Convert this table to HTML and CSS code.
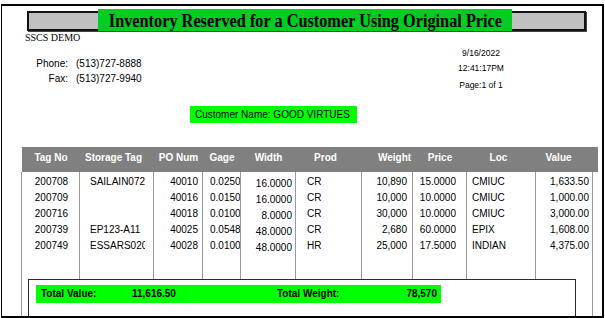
FILE: index.html
```html
<!DOCTYPE html>
<html>
<head>
<meta charset="utf-8">
<link rel="stylesheet" href="styles.css">
</head>
<body>
<div class="frame">
  <div class="titlebar">
    <div class="title"><span class="title-text">Inventory Reserved for a Customer Using Original Price</span></div>
  </div>
  <div class="company">SSCS DEMO</div>
  <div class="info">
    <div class="contact">
      <span class="lbl">Phone:</span><span>(513)727-8888</span>
      <span class="lbl">Fax:</span><span>(513)727-9940</span>
    </div>
    <div class="stamp">
      <div>9/16/2022</div>
      <div>12:41:17PM</div>
      <div class="page">Page:1 of 1</div>
    </div>
  </div>
  <div class="customer">Customer Name:&nbsp;GOOD VIRTUES</div>

  <div class="thead">
    <div class="h h-tag">Tag No</div>
    <div class="h h-stor">Storage Tag</div>
    <div class="h">PO Num</div>
    <div class="h">Gage</div>
    <div class="h">Width</div>
    <div class="h h-prod">Prod</div>
    <div class="h h-wt">Weight</div>
    <div class="h">Price</div>
    <div class="h h-loc">Loc</div>
    <div class="h h-val">Value</div>
  </div>

  <div class="tbody">
    <div class="grid">
      <div class="c c1">200708</div><div class="c c2"><span class="clip">SAILAIN0723</span></div><div class="c c3">40010</div><div class="c c4">0.0250</div><div class="c c5">16.0000</div><div class="c c6">CR</div><div class="c c7">10,890</div><div class="c c8">15.0000</div><div class="c c9">CMIUC</div><div class="c c10">1,633.50</div>
      <div class="c c1">200709</div><div class="c c2"><span class="clip"></span></div><div class="c c3">40016</div><div class="c c4">0.0150</div><div class="c c5">16.0000</div><div class="c c6">CR</div><div class="c c7">10,000</div><div class="c c8">10.0000</div><div class="c c9">CMIUC</div><div class="c c10">1,000.00</div>
      <div class="c c1">200716</div><div class="c c2"><span class="clip"></span></div><div class="c c3">40018</div><div class="c c4">0.0100</div><div class="c c5">8.0000</div><div class="c c6">CR</div><div class="c c7">30,000</div><div class="c c8">10.0000</div><div class="c c9">CMIUC</div><div class="c c10">3,000.00</div>
      <div class="c c1">200739</div><div class="c c2"><span class="clip">EP123-A11</span></div><div class="c c3">40025</div><div class="c c4">0.0548</div><div class="c c5">48.0000</div><div class="c c6">CR</div><div class="c c7">2,680</div><div class="c c8">60.0000</div><div class="c c9">EPIX</div><div class="c c10">1,608.00</div>
      <div class="c c1">200749</div><div class="c c2"><span class="clip">ESSARS0201</span></div><div class="c c3">40028</div><div class="c c4">0.0100</div><div class="c c5">48.0000</div><div class="c c6">HR</div><div class="c c7">25,000</div><div class="c c8">17.5000</div><div class="c c9">INDIAN</div><div class="c c10">4,375.00</div>
      <div class="c f"></div><div class="c f"></div><div class="c f"></div><div class="c f"></div><div class="c f"></div><div class="c f"></div><div class="c f"></div><div class="c f"></div><div class="c f"></div><div class="c f c10"></div>
    </div>
    <div class="totals">
      <div class="totbar">
        <span class="t-l1">Total Value:</span>
        <span class="t-v1">11,616.50</span>
        <span class="t-l2">Total Weight:</span>
        <span class="t-v2">78,570</span>
      </div>
    </div>
  </div>
</div>
</body>
</html>
```

FILE: styles.css
```css
html, body {
  margin: 0;
  padding: 0;
  background: #fff;
}
body {
  font-family: "Liberation Sans", Arial, sans-serif;
  color: #000;
}
.frame {
  margin: 4px 0 0 1px;
  width: 600px;
  height: 310px;
  border-style: solid;
  border-color: #000;
  border-width: 2px 2px 2px 1px;
  overflow: hidden;
}
.titlebar {
  margin: 5px 0 0 25px;
  width: 555px;
  height: 16px;
  border: 2px solid #111;
  background: #c0c0c0;
  box-shadow: 1px 1px 0 #444;
  display: flex;
  align-items: flex-start;
}
.title {
  margin: -4px 0 0 69px;
  width: 414px;
  height: 22px;
  background: #00cc22;
  display: flex;
  justify-content: center;
  overflow: hidden;
}
.title-text {
  display: block;
  flex: none;
  font-family: "Liberation Serif", "Times New Roman", serif;
  font-weight: bold;
  font-size: 18.5px;
  line-height: 24px;
  white-space: nowrap;
  color: #000;
  transform: scaleX(0.88);
  transform-origin: center top;
}
.company {
  margin: 1px 0 0 23px;
  font-family: "Liberation Serif", "Times New Roman", serif;
  font-size: 10px;
  line-height: 12px;
  height: 12px;
}
.info {
  display: flex;
  align-items: flex-start;
}
.contact {
  margin: 12px 0 0 30px;
  display: grid;
  grid-template-columns: 36px auto;
  column-gap: 8px;
  font-size: 10px;
  line-height: 15px;
}
.contact .lbl {
  text-align: right;
}
.stamp {
  margin: 2px 91px 0 auto;
  width: 60px;
  text-align: center;
  font-size: 8.5px;
  line-height: 15px;
}
.stamp .page {
  margin-top: 2px;
}
.customer {
  margin: 13px 0 0 188px;
  width: 162px;
  height: 17px;
  padding-left: 5px;
  background: #00ff00;
  font-size: 10px;
  line-height: 17px;
  white-space: nowrap;
}
.thead {
  margin: 24px 0 0 20px;
  width: 576px;
  height: 25px;
  background: #808080;
  display: grid;
  grid-template-columns: 58px 74px 49px 38px 55px 66px 51px 54px 69px 62px;
}
.h {
  color: #fff;
  font-weight: bold;
  font-size: 10px;
  line-height: 22px;
  text-align: center;
  white-space: nowrap;
}
.h-stor { padding-right: 7px; }
.h-prod { padding-right: 7px; }
.h-wt { padding-left: 14px; }
.h-loc { padding-right: 6px; }
.h-val { padding-right: 17px; }

.tbody {
  margin-left: 19px;
  width: 570px;
  height: 160px;
  border-left: 1px solid #9a9a9a;
  border-right: 1px solid #9a9a9a;
}
.grid {
  display: grid;
  grid-template-columns: 58px 74px 49px 38px 55px 66px 51px 54px 69px 56px;
  grid-template-rows: 18px repeat(4, 16px) 25px;
}
.c {
  box-sizing: border-box;
  border-right: 1px solid #9a9a9a;
  font-size: 10px;
  line-height: 16px;
  white-space: nowrap;
  overflow: hidden;
  padding-top: 0;
}
.grid > .c:nth-child(-n+10) { padding-top: 2px; }
.c10 { border-right: none; }
.c1 { text-align: center; padding-left: 2px; }
.c2 { padding-left: 10px; padding-right: 8px; }
.clip { display: block; overflow: hidden; }
.c3 { text-align: right; padding-right: 4px; }
.c4 { padding-left: 7px; }
.c5 { text-align: right; padding-right: 3px; padding-top: 2px; overflow: visible; }
.grid > .c5:nth-child(-n+10) { padding-top: 4px; }
.c6 { padding-left: 11px; }
.c7 { text-align: right; padding-right: 5px; }
.c8 { text-align: right; padding-right: 10px; }
.c9 { padding-left: 5px; }
.c10 { text-align: right; padding-right: 3px; }

.totals {
  margin-left: 6px;
  width: 546px;
  height: 40px;
  border: 1px solid #2a2a2a;
}
.totbar {
  margin: 5px 0 0 7px;
  width: 396px;
  height: 18px;
  padding: 0 4px 0 5px;
  background: #00ff00;
  display: flex;
  font-size: 10px;
  font-weight: bold;
  line-height: 18px;
  white-space: nowrap;
}
.t-l1 { width: 91px; }
.t-v1 { width: 145px; }
.t-l2 { flex: 1; }
.t-v2 { text-align: right; }
```
